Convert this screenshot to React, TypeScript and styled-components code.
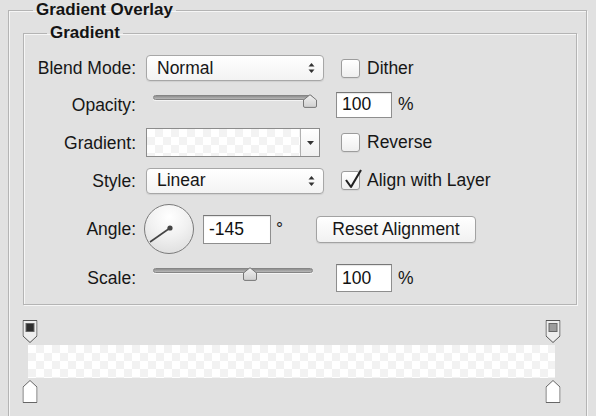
import React from "react";
import styled, { createGlobalStyle } from "styled-components";

const GlobalStyle = createGlobalStyle`
  html, body {
    margin: 0;
    padding: 0;
    background: #e1e1e1;
  }
  body {
    width: 596px;
    height: 416px;
    overflow: hidden;
    font-family: "Liberation Sans", Arial, Helvetica, sans-serif;
    color: #161616;
  }
`;

const Panel = styled.div`
  padding: 0 9px 0 8px;
`;

const Group = styled.fieldset<{ $inner?: boolean }>`
  margin: 0;
  min-width: 0;
  border: 1px solid #b4b4b4;
  box-shadow: inset 1px 1px 0 #f6f6f6, 1px 1px 0 #f6f6f6;
  padding: ${(p) => (p.$inner ? "12px 0 12px 0" : "3px 9px 0 14px")};
  min-height: ${(p) => (p.$inner ? "0" : "470px")};
`;

const Legend = styled.legend<{ $inner?: boolean }>`
  font-size: 17px;
  font-weight: bold;
  line-height: 20px;
  padding: 0 3px;
  margin-left: ${(p) => (p.$inner ? "23px" : "10px")};
  color: #141414;
`;

const Rows = styled.div`
  display: flex;
  flex-direction: column;
  gap: 10px;
`;

const Row = styled.div<{ $h: number }>`
  display: grid;
  grid-template-columns: 112px 1fr;
  column-gap: 10px;
  align-items: center;
  height: ${(p) => p.$h}px;
`;

const Label = styled.div`
  text-align: right;
  font-size: 17.5px;
  line-height: 20px;
`;

const Controls = styled.div`
  display: flex;
  align-items: center;
  height: 100%;
`;

const Slot = styled.div`
  width: 178px;
  flex: none;
  display: flex;
  align-items: center;
`;

const Select = styled.div`
  box-sizing: border-box;
  width: 178px;
  height: 26px;
  border: 1px solid #a7a7a7;
  border-radius: 4px;
  background: linear-gradient(#ffffff, #f3f3f3);
  box-shadow: 0 1px 1px rgba(0, 0, 0, 0.08);
  padding: 0 8px 0 10px;
  display: flex;
  align-items: center;
  justify-content: space-between;
  font-size: 17.5px;
`;

const CheckRow = styled.div`
  display: flex;
  align-items: center;
  margin-left: 17px;
  font-size: 17.5px;
`;

const Box = styled.div`
  position: relative;
  box-sizing: border-box;
  width: 19px;
  height: 19px;
  border: 1px solid #9c9c9c;
  border-radius: 3px;
  background: linear-gradient(#ffffff, #efefef);
  box-shadow: 0 1px 1px rgba(0, 0, 0, 0.06);
  margin-right: 7px;
  svg {
    position: absolute;
    left: 1px;
    top: -5px;
  }
`;

const SliderBox = styled.div`
  position: relative;
  width: 178px;
  height: 26px;
  align-self: flex-start;
`;

const Track = styled.div`
  margin: 4px 0 0 7px;
  width: 160px;
  height: 5px;
  box-sizing: border-box;
  border-radius: 3px;
  background: linear-gradient(#8e8e8e, #b9b9b9);
  border: 1px solid #858585;
  box-shadow: 0 1px 0 #f4f4f4;
`;

const Thumb = styled.div`
  position: absolute;
  top: 3px;
  width: 15px;
  height: 14px;
  transform: translateX(-50%);
  svg {
    display: block;
  }
`;

const NumInput = styled.input<{ $w: number; $h: number }>`
  box-sizing: border-box;
  width: ${(p) => p.$w}px;
  height: ${(p) => p.$h}px;
  border: 1px solid #8e8e8e;
  border-top-color: #777;
  background: #fff;
  box-shadow: inset 0 1px 1px rgba(0, 0, 0, 0.1);
  font-family: inherit;
  font-size: 17.5px;
  color: #111;
  padding: 0 0 0 5px;
  margin: 0;
  outline: none;
`;

const Unit = styled.span<{ $ml: number }>`
  margin-left: ${(p) => p.$ml}px;
  font-size: 17.5px;
`;

const Swatch = styled.div`
  box-sizing: border-box;
  width: 174px;
  height: 29px;
  border: 1px solid #8c8c8c;
  display: flex;
  background: #fff;
`;

const Checker = styled.div`
  flex: 1;
  background: repeating-conic-gradient(#f3f3f3 0 25%, #ffffff 0 50%) 0 0 / 16px 16px;
`;

const SwatchArrow = styled.div`
  width: 18px;
  border-left: 1px solid #b1b1b1;
  background: linear-gradient(#ffffff, #f0f0f0);
  display: flex;
  align-items: center;
  justify-content: center;
`;

const Dial = styled.div`
  box-sizing: border-box;
  width: 50px;
  height: 50px;
  margin-left: -2px;
  border-radius: 50%;
  border: 1px solid #7b7b7b;
  background: radial-gradient(circle at 50% 25%, #ffffff 0%, #f1f1f1 45%, #d9d9d9 100%);
  flex: none;
  svg {
    display: block;
  }
`;

const Button = styled.button`
  box-sizing: border-box;
  width: 160px;
  height: 27px;
  margin-left: 33px;
  border: 1px solid #a2a2a2;
  border-radius: 4px;
  background: linear-gradient(#ffffff, #f1f1f1);
  box-shadow: 0 1px 1px rgba(0, 0, 0, 0.08);
  font-family: inherit;
  font-size: 17.5px;
  color: #161616;
  padding: 0;
`;

const Editor = styled.div`
  width: 527px;
  margin: 15px 0 0 5px;
`;

const StopTrack = styled.div`
  position: relative;
  height: 25px;
`;

const Stop = styled.div<{ $bottom?: boolean }>`
  position: absolute;
  top: ${(p) => (p.$bottom ? "2px" : "0")};
  width: 15px;
  height: 23px;
  transform: translateX(-50%);
  svg {
    display: block;
  }
`;

const Bar = styled.div`
  height: 33px;
  background: repeating-conic-gradient(#f2f2f2 0 25%, #ffffff 0 50%) 0 0 / 16px 16px;
`;

const UpDown = () => (
  <svg width="7" height="12" viewBox="0 0 7 12">
    <path d="M0.5 4.5 L3.5 1 L6.5 4.5 Z" fill="#333" />
    <path d="M0.5 7.5 L3.5 11 L6.5 7.5 Z" fill="#333" />
  </svg>
);

const ThumbShape = () => (
  <svg width="15" height="14" viewBox="0 0 15 14">
    <defs>
      <linearGradient id="tg" x1="0" y1="0" x2="0" y2="1">
        <stop offset="0" stopColor="#f2f2f2" />
        <stop offset="1" stopColor="#cfcfcf" />
      </linearGradient>
    </defs>
    <path
      d="M7.5 0.7 L14 6 V12 Q14 13.4 12.6 13.4 H2.4 Q1 13.4 1 12 V6 Z"
      fill="url(#tg)"
      stroke="#777"
      strokeWidth="1"
    />
  </svg>
);

const Checkbox = ({ checked, label }: { checked?: boolean; label: string }) => (
  <CheckRow>
    <Box>
      {checked && (
        <svg width="22" height="24" viewBox="0 0 22 24">
          <path d="M3 13 L8 20 L18 3" fill="none" stroke="#222" strokeWidth="2.1" strokeLinejoin="round" />
        </svg>
      )}
    </Box>
    {label}
  </CheckRow>
);

const Slider = ({ pos }: { pos: number }) => (
  <SliderBox>
    <Track />
    <Thumb style={{ left: `${pos}px` }}>
      <ThumbShape />
    </Thumb>
  </SliderBox>
);

const TopStop = ({ color, pos }: { color: string; pos: number }) => (
  <Stop style={{ left: `calc(2px + (100% - 4px) * ${pos})` }}>
    <svg width="15" height="23" viewBox="0 0 15 23">
      <path d="M0.5 0.5 H14.5 V16 L7.5 22.5 L0.5 16 Z" fill="#eeeeee" stroke="#555" />
      <rect x="3.5" y="3.5" width="8" height="8" fill={color} stroke="#666" />
    </svg>
  </Stop>
);

const BottomStop = ({ pos }: { pos: number }) => (
  <Stop $bottom style={{ left: `calc(2px + (100% - 4px) * ${pos})` }}>
    <svg width="15" height="23" viewBox="0 0 15 23">
      <path d="M7.5 0.5 L14.5 7 V22.5 H0.5 V7 Z" fill="#ffffff" stroke="#666" />
    </svg>
  </Stop>
);

export default function App() {
  return (
    <>
      <GlobalStyle />
      <Panel>
        <Group>
          <Legend>Gradient Overlay</Legend>
          <Group $inner>
            <Legend $inner>Gradient</Legend>
            <Rows>
              <Row $h={26}>
                <Label>Blend Mode:</Label>
                <Controls>
                  <Slot>
                    <Select>
                      Normal
                      <UpDown />
                    </Select>
                  </Slot>
                  <Checkbox label="Dither" />
                </Controls>
              </Row>
              <Row $h={27}>
                <Label>Opacity:</Label>
                <Controls>
                  <Slider pos={164} />
                  <NumInput $w={56} $h={26} value="100" readOnly style={{ marginLeft: 12 }} />
                  <Unit $ml={6}>%</Unit>
                </Controls>
              </Row>
              <Row $h={29}>
                <Label>Gradient:</Label>
                <Controls>
                  <Slot>
                    <Swatch>
                      <Checker />
                      <SwatchArrow>
                        <svg width="7" height="4" viewBox="0 0 7 4">
                          <path d="M0 0 H7 L3.5 4 Z" fill="#333" />
                        </svg>
                      </SwatchArrow>
                    </Swatch>
                  </Slot>
                  <Checkbox label="Reverse" />
                </Controls>
              </Row>
              <Row $h={27}>
                <Label>Style:</Label>
                <Controls>
                  <Slot>
                    <Select>
                      Linear
                      <UpDown />
                    </Select>
                  </Slot>
                  <Checkbox checked label="Align with Layer" />
                </Controls>
              </Row>
              <Row $h={50}>
                <Label>Angle:</Label>
                <Controls>
                  <Dial>
                    <svg width="48" height="48" viewBox="0 0 48 48">
                      <line x1="25" y1="23" x2="5" y2="37" stroke="#444" strokeWidth="1.6" />
                      <circle cx="25" cy="23" r="2.6" fill="#444" />
                    </svg>
                  </Dial>
                  <NumInput $w={68} $h={29} value="-145" readOnly style={{ marginLeft: 9 }} />
                  <Unit $ml={5}>°</Unit>
                  <Button>Reset Alignment</Button>
                </Controls>
              </Row>
              <Row $h={28}>
                <Label>Scale:</Label>
                <Controls>
                  <Slider pos={104} />
                  <NumInput $w={56} $h={28} value="100" readOnly style={{ marginLeft: 12 }} />
                  <Unit $ml={6}>%</Unit>
                </Controls>
              </Row>
            </Rows>
          </Group>
          <Editor>
            <StopTrack>
              <TopStop color="#2e2e2e" pos={0} />
              <TopStop color="#9c9c9c" pos={1} />
            </StopTrack>
            <Bar />
            <StopTrack>
              <BottomStop pos={0} />
              <BottomStop pos={1} />
            </StopTrack>
          </Editor>
        </Group>
      </Panel>
    </>
  );
}
